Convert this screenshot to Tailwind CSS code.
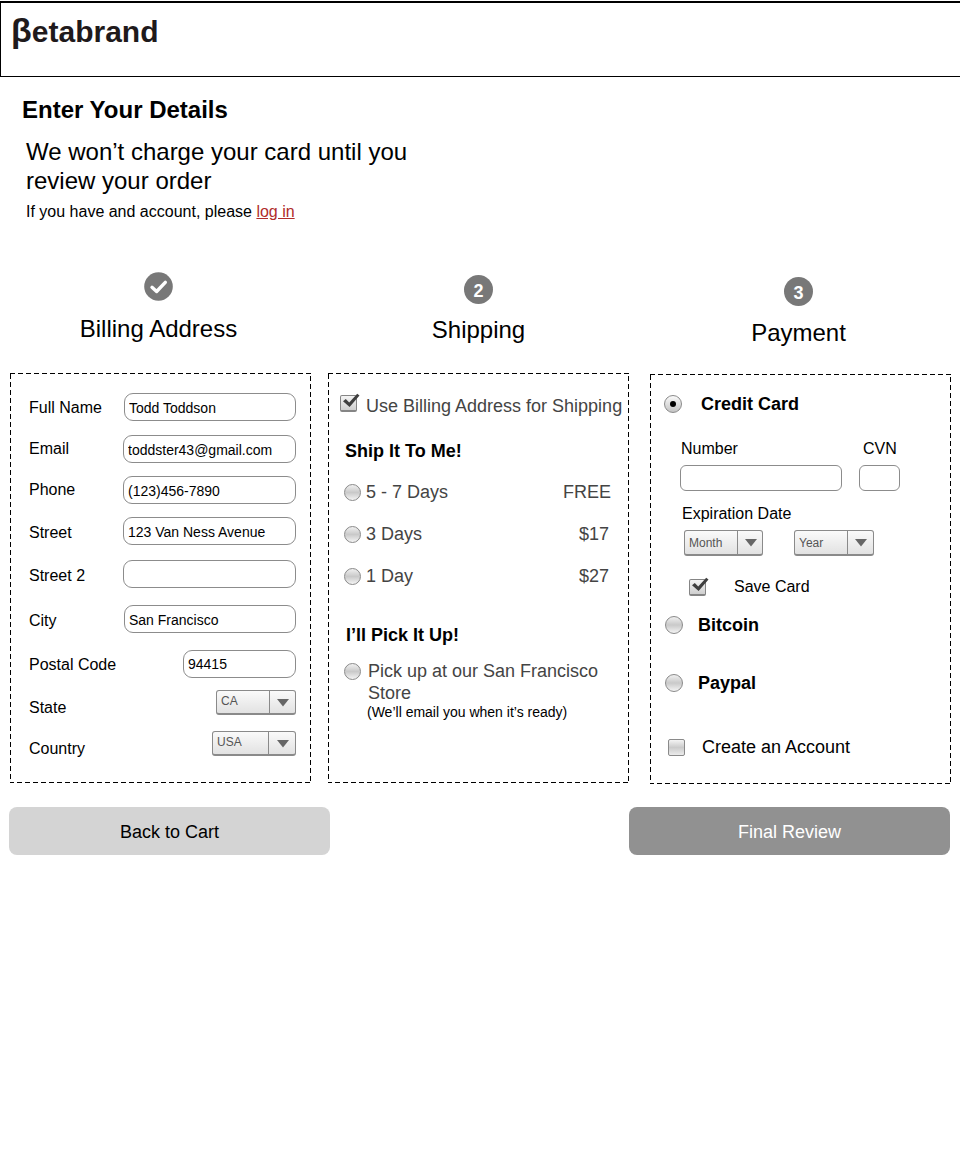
<!DOCTYPE html>
<html lang="en">
<head>
<meta charset="utf-8">
<meta name="viewport" content="width=device-width, initial-scale=1">
<title>Betabrand – Enter Your Details</title>
<script src="https://cdn.jsdelivr.net/npm/@tailwindcss/browser@4"></script>
</head>
<body class="min-h-screen bg-white font-['Liberation_Sans',Arial,sans-serif] text-base leading-6 text-black">
<svg class="hidden">
  <symbol id="tick" viewBox="0 0 18 16"><path d="M1 8.2 3.8 6 7.2 9.4 15.2.8l2.3 1.6L7.6 14Z" fill="#3f3f3f"/></symbol>
  <symbol id="arrow" viewBox="0 0 12 8"><path d="M0 0h12L6 7.5Z" fill="#666"/></symbol>
</svg>

<header class="mt-px flex h-[76px] items-start border-t-2 border-b border-l border-black pt-[9px] pl-[10px]">
  <a href="#" class="text-[30px] leading-[36px] font-bold text-[#1f1a1c]"><span class="text-[34px]">β</span>etabrand</a>
</header>

<main>
  <section class="pt-[21px] pl-[22px]">
    <h1 class="text-2xl leading-6 font-bold">Enter Your Details</h1>
    <div class="mt-[15px] pl-1">
      <p class="max-w-[420px] text-2xl leading-[29px]">We won’t charge your card until you review your order</p>
      <p class="mt-[5px] leading-6">If you have and account, please <a href="#" class="text-[#b02c2a] underline">log in</a></p>
    </div>
  </section>

  <form>
    <div class="flex items-start pr-[9px] pl-[10px]">
      <!-- Billing address -->
      <section class="min-w-0 flex-1">
        <div class="flex h-[149px] flex-col items-center pt-[48px] pr-1">
          <svg class="h-[29px] w-[29px]" viewBox="0 0 29 29"><circle cx="14.500" cy="14.500" r="14.300" fill="#787878"/><path d="m8 15.300 4.600 4.200 8.700-9.200" fill="none" stroke="#fff" stroke-width="3.400" stroke-linecap="round" stroke-linejoin="round"/></svg>
          <h2 class="mt-[14px] text-2xl leading-7">Billing Address</h2>
        </div>
        <div class="relative flex h-[410px] flex-col pt-5 pr-[15px] pl-[19px]">
          <svg class="pointer-events-none absolute inset-0 h-full w-full"><rect x="0" y="0" width="100%" height="100%" fill="none" stroke="#000" stroke-width="2" stroke-dasharray="5 3"/></svg>
          <div class="flex h-7 items-center justify-between"><label for="name" class="pt-0.5">Full Name</label><input id="name" type="text" value="Todd Toddson" class="h-7 w-[172px] rounded-[9px] border border-[#8c8c8c] px-1 pt-0.5 text-sm"></div>
          <div class="mt-[14px] flex h-7 items-center justify-between"><label for="email">Email</label><input id="email" type="text" value="toddster43@gmail.com" class="h-7 w-[173px] rounded-[9px] border border-[#8c8c8c] px-1 pt-0.5 text-sm"></div>
          <div class="mt-[13px] flex h-7 items-center justify-between"><label for="phone">Phone</label><input id="phone" type="text" value="(123)456-7890" class="h-7 w-[173px] rounded-[9px] border border-[#8c8c8c] px-1 pt-0.5 text-sm"></div>
          <div class="mt-[13px] flex h-7 items-center justify-between"><label for="street" class="pt-1">Street</label><input id="street" type="text" value="123 Van Ness Avenue" class="h-7 w-[173px] rounded-[9px] border border-[#8c8c8c] px-1 pt-0.5 text-sm"></div>
          <div class="mt-[15px] flex h-7 items-center justify-between"><label for="street2" class="pt-1">Street 2</label><input id="street2" type="text" class="h-7 w-[173px] rounded-[9px] border border-[#8c8c8c] px-1 pt-0.5 text-sm"></div>
          <div class="mt-[17px] flex h-7 items-center justify-between"><label for="city" class="pt-1">City</label><input id="city" type="text" value="San Francisco" class="h-7 w-[172px] rounded-[9px] border border-[#8c8c8c] px-1 pt-0.5 text-sm"></div>
          <div class="mt-[17px] flex h-7 items-center justify-between"><label for="zip" class="pt-0.5">Postal Code</label><input id="zip" type="text" value="94415" class="h-7 w-[113px] rounded-[9px] border border-[#8c8c8c] px-1 text-sm"></div>
          <div class="mt-3 flex h-[25px] items-center justify-between">
            <label for="state" class="pt-2.5">State</label>
            <div class="relative h-[25px] w-20">
              <select id="state" class="block h-full w-full appearance-none rounded-[3px] border border-b-2 border-[#8a8a8a] bg-linear-to-b from-[#fafafa] to-[#e2e2e2] pr-7 pb-0.5 pl-1 text-xs text-[#555]"><option>CA</option></select>
              <span class="pointer-events-none absolute inset-y-0 right-0 flex w-[27px] items-center justify-center border-l border-[#8a8a8a]"><svg class="h-2 w-3"><use href="#arrow"/></svg></span>
            </div>
          </div>
          <div class="mt-4 flex h-[25px] items-center justify-between">
            <label for="country" class="pt-2.5">Country</label>
            <div class="relative h-[25px] w-[84px]">
              <select id="country" class="block h-full w-full appearance-none rounded-[3px] border border-b-2 border-[#8a8a8a] bg-linear-to-b from-[#fafafa] to-[#e2e2e2] pr-7 pb-0.5 pl-1 text-xs text-[#555]"><option>USA</option></select>
              <span class="pointer-events-none absolute inset-y-0 right-0 flex w-7 items-center justify-center border-l border-[#8a8a8a]"><svg class="h-2 w-3"><use href="#arrow"/></svg></span>
            </div>
          </div>
        </div>
      </section>

      <!-- Shipping -->
      <section class="ml-[17px] min-w-0 flex-1">
        <div class="flex h-[149px] flex-col items-center pt-[51px]">
          <span class="flex h-[29px] w-[29px] items-center justify-center rounded-full bg-[#787878] pt-0.5 text-lg leading-5 font-bold text-white">2</span>
          <h2 class="mt-3 text-2xl leading-7">Shipping</h2>
        </div>
        <div class="relative flex h-[410px] flex-col pt-5 text-lg leading-[22px] text-[#444]">
          <svg class="pointer-events-none absolute inset-0 h-full w-full"><rect x="0" y="0" width="100%" height="100%" fill="none" stroke="#000" stroke-width="2" stroke-dasharray="5 3"/></svg>
          <div class="flex items-start pl-3">
            <span class="relative mt-0.5 mr-[9px] h-[17px] w-[17px] flex-none">
              <input id="same" type="checkbox" checked class="peer block h-[17px] w-[17px] appearance-none rounded-[2px] border border-b-2 border-[#858585] bg-linear-to-b from-[#f4f4f4] to-[#cfcfcf]">
              <svg class="pointer-events-none absolute -top-0.5 left-0.5 hidden h-4 w-[18px] peer-checked:block"><use href="#tick"/></svg>
            </span>
            <label for="same" class="pt-0.5 whitespace-nowrap">Use Billing Address for Shipping</label>
          </div>
          <h3 class="mt-[23px] pl-[17px] font-bold text-black">Ship It To Me!</h3>
          <div class="mt-[19px] flex items-center pr-[18px] pl-4">
            <input id="d7" type="radio" name="ship" class="mr-[5px] h-[17px] w-[17px] flex-none appearance-none rounded-full border border-[#8a8a8a] bg-linear-to-b from-[#f0f0f0] via-[#c9c9c9] to-[#f4f4f4]">
            <label for="d7" class="flex flex-1 justify-between">5 - 7 Days <span>FREE</span></label>
          </div>
          <div class="mt-5 flex items-center pr-5 pl-4">
            <input id="d3" type="radio" name="ship" class="mr-[5px] h-[17px] w-[17px] flex-none appearance-none rounded-full border border-[#8a8a8a] bg-linear-to-b from-[#f0f0f0] via-[#c9c9c9] to-[#f4f4f4]">
            <label for="d3" class="flex flex-1 justify-between">3 Days <span>$17</span></label>
          </div>
          <div class="mt-5 flex items-center pr-5 pl-4">
            <input id="d1" type="radio" name="ship" class="mr-[5px] h-[17px] w-[17px] flex-none appearance-none rounded-full border border-[#8a8a8a] bg-linear-to-b from-[#f0f0f0] via-[#c9c9c9] to-[#f4f4f4]">
            <label for="d1" class="flex flex-1 justify-between">1 Day <span>$27</span></label>
          </div>
          <h3 class="mt-[37px] pl-[18px] font-bold text-black">I’ll Pick It Up!</h3>
          <div class="mt-[14px] flex items-start pr-5 pl-4">
            <input id="pickup" type="radio" name="ship" class="mt-[3px] mr-[7px] h-[17px] w-[17px] flex-none appearance-none rounded-full border border-[#8a8a8a] bg-linear-to-b from-[#f0f0f0] via-[#c9c9c9] to-[#f4f4f4]">
            <label for="pickup">Pick up at our San Francisco Store</label>
          </div>
          <p class="pl-[39px] text-sm leading-4 text-black">(We’ll email you when it’s ready)</p>
        </div>
      </section>

      <!-- Payment -->
      <section class="ml-[21px] min-w-0 flex-1">
        <div class="flex h-[150px] flex-col items-center pt-[53px] pr-1">
          <span class="flex h-[29px] w-[29px] items-center justify-center rounded-full bg-[#787878] pt-0.5 text-lg leading-5 font-bold text-white">3</span>
          <h2 class="mt-[13px] text-2xl leading-7">Payment</h2>
        </div>
        <div class="relative flex h-[410px] flex-col pt-[19px]">
          <svg class="pointer-events-none absolute inset-0 h-full w-full"><rect x="0" y="0" width="100%" height="100%" fill="none" stroke="#000" stroke-width="2" stroke-dasharray="5 3"/></svg>
          <div class="flex items-center pl-[14px] text-lg leading-[22px] font-bold">
            <span class="relative mr-[19px] h-[18px] w-[18px] flex-none">
              <input id="card" type="radio" name="pay" checked class="peer block h-[18px] w-[18px] appearance-none rounded-full border border-[#8a8a8a] bg-linear-to-b from-[#fafafa] to-[#c4c4c4]">
              <span class="pointer-events-none absolute inset-1.5 hidden rounded-full bg-black peer-checked:block"></span>
            </span>
            <label for="card">Credit Card</label>
          </div>
          <div class="mt-[22px] flex gap-[17px] pl-[30px]">
            <div class="flex w-[162px] flex-col"><label for="number" class="pl-px">Number</label><input id="number" type="text" class="mt-1 h-[26px] rounded-md border border-[#8c8c8c] px-1 text-sm"></div>
            <div class="flex w-[41px] flex-col"><label for="cvn" class="pl-1">CVN</label><input id="cvn" type="text" class="mt-1 h-[26px] rounded-md border border-[#8c8c8c] px-1 text-sm"></div>
          </div>
          <label for="month" class="mt-[11px] pl-8">Expiration Date</label>
          <div class="mt-1 flex gap-[31px] pl-[34px]">
            <div class="relative h-[26px] w-[79px]">
              <select id="month" class="block h-full w-full appearance-none rounded-[3px] border border-b-2 border-[#8a8a8a] bg-linear-to-b from-[#fafafa] to-[#e2e2e2] pr-6 pl-1 text-xs text-[#555]"><option>Month</option></select>
              <span class="pointer-events-none absolute inset-y-0 right-0 flex w-[26px] items-center justify-center border-l border-[#8a8a8a]"><svg class="h-2 w-3"><use href="#arrow"/></svg></span>
            </div>
            <div class="relative h-[26px] w-20">
              <select id="year" aria-label="Year" class="block h-full w-full appearance-none rounded-[3px] border border-b-2 border-[#8a8a8a] bg-linear-to-b from-[#fafafa] to-[#e2e2e2] pr-6 pl-1 text-xs text-[#555]"><option>Year</option></select>
              <span class="pointer-events-none absolute inset-y-0 right-0 flex w-[27px] items-center justify-center border-l border-[#8a8a8a]"><svg class="h-2 w-3"><use href="#arrow"/></svg></span>
            </div>
          </div>
          <div class="mt-[19px] flex items-center pl-[39px]">
            <span class="relative mr-7 h-[17px] w-[17px] flex-none">
              <input id="save" type="checkbox" checked class="peer block h-[17px] w-[17px] appearance-none rounded-[2px] border border-b-2 border-[#858585] bg-linear-to-b from-[#f4f4f4] to-[#cfcfcf]">
              <svg class="pointer-events-none absolute -top-0.5 left-0.5 hidden h-4 w-[18px] peer-checked:block"><use href="#tick"/></svg>
            </span>
            <label for="save">Save Card</label>
          </div>
          <div class="mt-[15px] flex items-center pl-[15px] text-lg leading-[22px] font-bold">
            <input id="bitcoin" type="radio" name="pay" class="mr-[15px] h-[18px] w-[18px] flex-none appearance-none rounded-full border border-[#8a8a8a] bg-linear-to-b from-[#f0f0f0] via-[#c9c9c9] to-[#f4f4f4]">
            <label for="bitcoin">Bitcoin</label>
          </div>
          <div class="mt-9 flex items-center pl-[15px] text-lg leading-[22px] font-bold">
            <input id="paypal" type="radio" name="pay" class="mr-[15px] h-[18px] w-[18px] flex-none appearance-none rounded-full border border-[#8a8a8a] bg-linear-to-b from-[#f0f0f0] via-[#c9c9c9] to-[#f4f4f4]">
            <label for="paypal">Paypal</label>
          </div>
          <div class="mt-[42px] flex items-center pl-[18px] text-lg leading-[22px]">
            <input id="account" type="checkbox" class="mr-[17px] h-[17px] w-[17px] flex-none appearance-none rounded-[2px] border border-[#8a8a8a] bg-linear-to-b from-[#f4f4f4] via-[#cbcbcb] to-[#ececec]">
            <label for="account">Create an Account</label>
          </div>
        </div>
      </section>
    </div>

    <div class="mt-[23px] flex justify-between pr-2.5 pl-[9px]">
      <button type="button" class="h-12 w-1/3 max-w-[321px] flex-auto rounded-lg bg-[#d4d4d4] pt-0.5 text-lg">Back to Cart</button>
      <button type="submit" class="h-12 w-1/3 max-w-[321px] flex-auto rounded-lg bg-[#919191] pt-0.5 text-lg text-white">Final Review</button>
    </div>
  </form>
</main>
</body>
</html>
